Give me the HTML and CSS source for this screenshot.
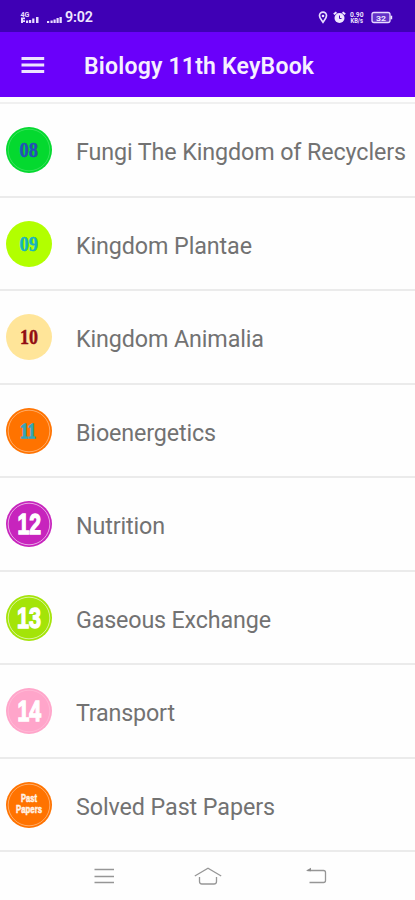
FILE: index.html
```html
<!DOCTYPE html>
<html lang="en">
<head>
<meta charset="utf-8">
<meta name="viewport" content="width=device-width, initial-scale=1">
<title>Biology 11th KeyBook</title>
<link rel="stylesheet" href="styles.css">
</head>
<body>
<div class="screen">
  <div class="status">
    <svg class="signal" width="45" height="14" viewBox="0 0 45 14" fill="#e8dcff">
      <text class="net" x="0.500" y="6" textLength="9" lengthAdjust="spacingAndGlyphs">4G</text>
      <path d="M1 6.500h4v1.700H3V9.300H5v1.600H3V12H1zM6 9.500h2.200V12H6zM9 9h2.200v3H9zM12.200 7.500h2.200V12h-2.200zM16 6h2.500v6H16z"/>
      <path d="M27 10h2.200v2h-2.200zM30.500 9.500h2.200V12h-2.200zM33.500 8.500h2.200V12h-2.200zM36.500 7h2.200v5h-2.200zM39.500 6h2.300v6h-2.300z"/>
    </svg>
    <span class="clock">9:02</span>
    <svg class="indicators" width="78" height="16" viewBox="0 0 78 16" fill="#eee6ff">
      <path fill="none" stroke="#e6dbff" stroke-width="1.700" d="M5 13.200C3.500 10.900 1.500 9 1.500 6.700a3.500 3.500 0 0 1 7 0C8.500 9 6.500 10.900 5 13.200z"/>
      <circle cx="5" cy="7" r="1.300"/>
      <circle cx="21.500" cy="9" r="5"/>
      <path stroke="#eee6ff" stroke-width="2" d="M15.800 5.200l2.700-2M27.200 5.200l-2.700-2"/>
      <path fill="none" stroke="#4500bd" stroke-width="1" d="M21.500 6.500v3h2"/>
      <text class="rate" x="32" y="7.700" textLength="13.500" lengthAdjust="spacingAndGlyphs">0.90</text>
      <text class="rate" x="32.500" y="14" textLength="12.500" lengthAdjust="spacingAndGlyphs">KB/s</text>
      <rect x="54" y="3.500" width="18" height="10" rx="2" fill="#8a64dc" fill-opacity=".5" stroke="#e6dbff" stroke-width="1.300"/>
      <path d="M72.500 6.700h1.700v3.600h-1.700z"/>
      <text class="level" x="58" y="11.500" textLength="10" lengthAdjust="spacingAndGlyphs">32</text>
    </svg>
  </div>
  <header class="appbar">
    <svg class="menu" width="24" height="18" viewBox="0 0 24 18"><path stroke="#eee3ff" stroke-width="3" d="M.5 2.500h22.700M.5 9h22.700M.5 15.500h22.700"/></svg>
    <h1 class="title"><svg width="240" height="34"><text x="0" y="24" textLength="230">Biology 11th KeyBook</text></svg></h1>
  </header>
  <main class="list">
    <div class="row">
      <svg class="badge" viewBox="0 0 46 46"><circle cx="23" cy="23" r="23" fill="#04d92f"/><circle class="ring faint" cx="23" cy="23" r="20.800"/><text class="serif" x="13.500" y="30" fill="#2450b8" stroke="#2450b8" textLength="18.500" lengthAdjust="spacingAndGlyphs">08</text></svg>
      <svg class="label" height="34"><text x="0" y="24" textLength="330">Fungi The Kingdom of Recyclers</text></svg>
    </div>
    <div class="row">
      <svg class="badge" viewBox="0 0 46 46"><circle cx="23" cy="23" r="23" fill="#b2ff00"/><text class="serif" x="13.500" y="29.500" fill="#16b3bf" stroke="#16b3bf" textLength="18.500" lengthAdjust="spacingAndGlyphs">09</text></svg>
      <svg class="label" height="34"><text x="0" y="24" textLength="176">Kingdom Plantae</text></svg>
    </div>
    <div class="row">
      <svg class="badge" viewBox="0 0 46 46"><circle cx="23" cy="23" r="23" fill="#ffe599"/><text class="serif" x="14" y="29.500" fill="#910d12" stroke="#910d12" textLength="18" lengthAdjust="spacingAndGlyphs">10</text></svg>
      <svg class="label" height="34"><text x="0" y="24" textLength="188">Kingdom Animalia</text></svg>
    </div>
    <div class="row">
      <svg class="badge" viewBox="0 0 46 46"><circle cx="23" cy="23" r="23" fill="#ff7300"/><circle class="ring mild" cx="23" cy="23" r="20.800"/><text class="serif heavy" x="14" y="30" fill="#35a5b8" stroke="#35a5b8" textLength="16" lengthAdjust="spacingAndGlyphs">11</text></svg>
      <svg class="label" height="34"><text x="0" y="24" textLength="140">Bioenergetics</text></svg>
    </div>
    <div class="row">
      <svg class="badge" viewBox="0 0 46 46"><circle cx="23" cy="23" r="23" fill="#c724bd"/><circle class="ring" cx="23" cy="23" r="20.800"/><text class="block" x="11.500" y="33" textLength="23.500" lengthAdjust="spacingAndGlyphs">12</text></svg>
      <svg class="label" height="34"><text x="0" y="24" textLength="89">Nutrition</text></svg>
    </div>
    <div class="row">
      <svg class="badge" viewBox="0 0 46 46"><circle cx="23" cy="23" r="23" fill="#a4e408"/><circle class="ring" cx="23" cy="23" r="20.800"/><text class="block" x="11" y="33" textLength="24" lengthAdjust="spacingAndGlyphs">13</text></svg>
      <svg class="label" height="34"><text x="0" y="24" textLength="195">Gaseous Exchange</text></svg>
    </div>
    <div class="row">
      <svg class="badge" viewBox="0 0 46 46"><circle cx="23" cy="23" r="23" fill="#ffa5ca"/><circle class="ring faint" cx="23" cy="23" r="20.800"/><text class="block" x="11.500" y="33" textLength="23.500" lengthAdjust="spacingAndGlyphs">14</text></svg>
      <svg class="label" height="34"><text x="0" y="24" textLength="99">Transport</text></svg>
    </div>
    <div class="row">
      <svg class="badge" viewBox="0 0 46 46"><circle cx="23" cy="23" r="23" fill="#ff7300"/><circle class="ring mild" cx="23" cy="23" r="20.800"/><text class="small" x="15" y="19.500" textLength="16" lengthAdjust="spacingAndGlyphs">Past</text><text class="small" x="10" y="31" textLength="26" lengthAdjust="spacingAndGlyphs">Papers</text></svg>
      <svg class="label" height="34"><text x="0" y="24" textLength="199">Solved Past Papers</text></svg>
    </div>
  </main>
  <nav class="navbar">
    <svg width="28" height="22" viewBox="0 0 28 22"><path d="M4.500 3.500h19.500M4.500 10.500h19.500M4.500 16.500h19.500"/></svg>
    <svg width="28" height="22" viewBox="0 0 28 22"><path d="M.8 10L14 2.200 27.200 10M5.500 11v4.500q0 2.500 2.500 2.500h12q2.500 0 2.500-2.500V11"/></svg>
    <svg width="28" height="22" viewBox="0 0 28 22"><path d="M4.500 4.500H20.500q2 0 2 2v8q0 2-2 2H6.500"/><path class="tip" d="M3 4.700L8 1.800v3.400z"/></svg>
  </nav>
</div>
</body>
</html>
```
FILE: styles.css
```css
* { box-sizing: border-box; }
body {
  margin: 0;
  background: #fefefe;
  font-family: Roboto, "Liberation Sans", sans-serif;
}
svg { display: block; flex: none; }
.screen {
  width: 415px;
  height: 900px;
  display: flex;
  flex-direction: column;
  overflow: hidden;
}
.status {
  height: 32px;
  flex: none;
  display: flex;
  align-items: center;
  padding: 2px 19px 0 20px;
  background: #3f00b5;
  color: #f0e8ff;
}
.signal { margin-top: 2px; }
.clock {
  font-size: 14.3px;
  font-weight: 600;
  line-height: 16px;
  letter-spacing: -0.2px;
}
.indicators { margin-left: auto; }
.net { font-size: 7px; font-weight: 700; }
.rate { font-size: 6.5px; font-weight: 700; }
.level { font-size: 8px; font-weight: 700; }
.appbar {
  height: 65px;
  flex: none;
  display: flex;
  align-items: center;
  gap: 39px;
  padding-left: 21px;
  background: #6a00fa;
}
.title {
  margin: 5px 0 0;
  font-size: 23px;
  font-weight: 600;
  fill: #f6efff;
}
.list {
  flex: none;
  margin-top: 5px;
  border-top: 2px solid #f0f0f0;
}
.row {
  height: 93.5px;
  display: flex;
  align-items: center;
  gap: 24px;
  padding-left: 6px;
  border-bottom: 2px solid #ebebeb;
}
.badge { width: 46px; height: 46px; margin-top: 1px; }
.label {
  width: 339px;
  font-size: 23.3px;
  fill: #727272;
  margin-top: 7px;
}
.ring { fill: none; stroke: #ffffff; stroke-width: 0.8; opacity: 0.75; }
.mild { opacity: 0.5; }
.faint { opacity: 0.25; }
.serif {
  font-family: "Liberation Serif", serif;
  font-size: 22px;
  font-weight: 700;
  stroke-width: 0.5;
}
.heavy { stroke-width: 1.3; }
.block {
  font-family: "Liberation Sans", sans-serif;
  font-size: 29px;
  font-weight: 700;
  fill: #ffffff;
  stroke: #ffffff;
  stroke-width: 1.4;
}
.small {
  font-family: "Liberation Sans", sans-serif;
  font-size: 10.5px;
  font-weight: 700;
  fill: #fff3e8;
  stroke: #fff3e8;
  stroke-width: 0.5;
}
.navbar {
  flex: 1;
  display: grid;
  grid-template-columns: 28px 28px 28px;
  column-gap: 76px;
  align-content: start;
  padding: 14px 0 0 90px;
}
.navbar svg:last-child { margin-left: 5px; }
.navbar path { fill: none; stroke: #969696; stroke-width: 1.3; }
.navbar .tip { fill: #8c8c8c; stroke: none; }
```
